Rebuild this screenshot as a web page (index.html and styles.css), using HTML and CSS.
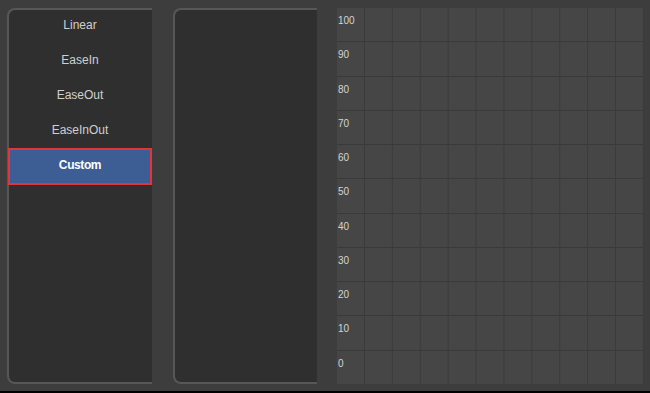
FILE: index.html
```html
<!DOCTYPE html>
<html lang="en">
<head>
    <meta charset="UTF-8">
    <meta name="viewport" content="width=device-width, initial-scale=1.0">
    <title>Easing editor</title>
    <link rel="stylesheet" href="styles.css">
</head>
<body>
    <div class="app">
        <div class="panel list-panel">
            <div class="ease-list">
                <div class="ease-item">Linear</div>
                <div class="ease-item">EaseIn</div>
                <div class="ease-item">EaseOut</div>
                <div class="ease-item">EaseInOut</div>
                <div class="ease-item selected">Custom</div>
            </div>
        </div>
        <div class="panel props-panel"></div>
        <div class="chart">
            <div class="chart-row"><span class="tick">100</span></div>
            <div class="chart-row"><span class="tick">90</span></div>
            <div class="chart-row"><span class="tick">80</span></div>
            <div class="chart-row"><span class="tick">70</span></div>
            <div class="chart-row"><span class="tick">60</span></div>
            <div class="chart-row"><span class="tick">50</span></div>
            <div class="chart-row"><span class="tick">40</span></div>
            <div class="chart-row"><span class="tick">30</span></div>
            <div class="chart-row"><span class="tick">20</span></div>
            <div class="chart-row"><span class="tick">10</span></div>
            <div class="chart-row"><span class="tick">0</span></div>
        </div>
    </div>
</body>
</html>
```

FILE: styles.css
```css
      html, body {
        margin: 0;
        background: #000;
        font-family: "Liberation Sans", Arial, sans-serif;
      }

      .app {   /* main area */
        display: flex;
        height: 391px;
        box-sizing: border-box;
        padding: 8px 0 7px 7px;
        background: #3d3d3d;
        overflow: hidden;
      }

      .panel {
        background: #2f2f2f;
        border: 2px solid #575757;
        border-right: none;
        border-radius: 8px 0 0 8px;
        box-sizing: border-box;
      }

      .list-panel {
        width: 145px;
        flex-shrink: 0;
      }

      .props-panel {
        width: 144px;
        flex-shrink: 0;
        margin-left: 21px;
      }

      .ease-list {
        display: flex;
        flex-direction: column;
        margin: -2px 0 0 -1px;
      }

      .ease-item {
        height: 35px;
        line-height: 34px;
        text-align: center;
        font-size: 12px;
        color: #cfcfcf;
      }

      .ease-item.selected {
        height: 33px;
        line-height: 31px;
        background: #3c5e94;
        border: 2px solid #e0353a;
        color: #fff;
        font-weight: bold;
        letter-spacing: -0.4px;
      }

      .chart {
        width: 307px;
        flex-shrink: 0;
        margin-left: 20px;
        display: flex;
        flex-direction: column;
        background-color: #464646;
        background-image: linear-gradient(to right, transparent calc(100% - 1px), #3a3a3a calc(100% - 1px));
        background-size: calc(100% / 11) 100%;
      }

      .chart-row {
        flex: 1;
        padding: 2px 0 0 1px;
      }

      .chart-row + .chart-row {
        border-top: 1px solid #3a3a3a;
      }

      .tick {
        font-size: 10px;
        color: #d4d4d4;
      }
```
